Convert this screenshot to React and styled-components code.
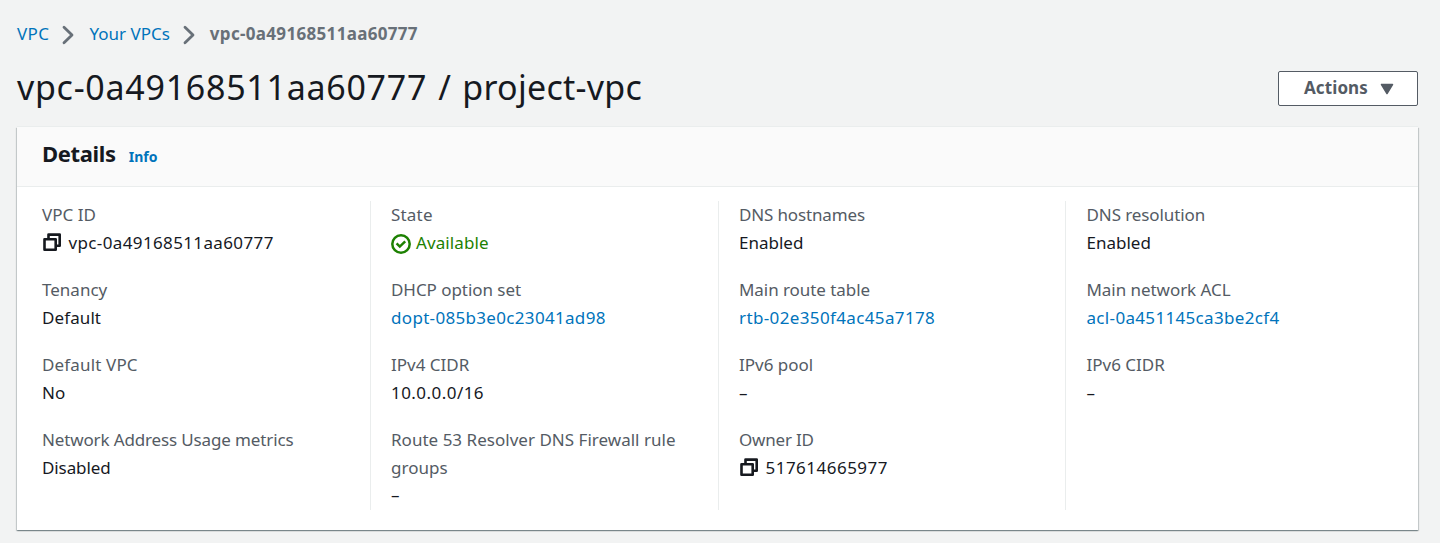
import React from "react";
import styled, { createGlobalStyle } from "styled-components";

const Global = createGlobalStyle`
  *, *::before, *::after { box-sizing: border-box; }
  body { margin: 0; background: #f2f3f3; font-family: "Noto Sans", "Open Sans", sans-serif; font-size: 17px; line-height: 28px; color: #16191f; }
`;

const Page = styled.main`
  height: 543px;
  padding: 20px 22px 0 17px;
  overflow: hidden;
`;

const Breadcrumbs = styled.nav`
  display: flex;
  align-items: center;
  height: 28px;
`;

const Text = styled.span`
  white-space: pre-line;
  letter-spacing: ${(p) => p.$track || 0}px;
`;

const Link = styled(Text).attrs({ as: "a" })`
  color: #0073bb;
`;

const Current = styled(Text)`
  color: #687078;
  font-weight: 700;
`;

const Chevron = styled.svg`
  flex: none;
  width: 12px;
  height: 20px;
  margin: 2px 15px 0 13px;
`;

const TitleRow = styled.div`
  display: flex;
  justify-content: space-between;
  height: 78px;
  padding-top: 17px;
`;

const Title = styled.h1`
  margin: 0;
  font-size: 34px;
  font-weight: 400;
  line-height: 44px;
  word-spacing: 2px;
  white-space: nowrap;
`;

const ActionsButton = styled.button`
  display: flex;
  align-items: center;
  width: 140px;
  height: 35px;
  margin: 6px 0 0;
  padding: 0 0 2px 25px;
  gap: 12px;
  border: 1px solid #545b64;
  border-radius: 2px;
  background: #fff;
  color: #545b64;
  font: 700 17px/28px "Noto Sans", "Open Sans", sans-serif;
`;

const Caret = styled.svg`
  width: 14px;
  height: 12px;
  margin-top: 2px;
`;

const Panel = styled.section`
  width: 1401px;
  height: 403px;
  margin-top: 1px;
  background: #fff;
  box-shadow: 0 1px 1px 0 rgba(0, 28, 36, 0.3), 1px 1px 1px 0 rgba(0, 28, 36, 0.15), -1px 1px 1px 0 rgba(0, 28, 36, 0.15), 0 -1px 0 0 #eaeded;
`;

const PanelHeader = styled.header`
  display: flex;
  align-items: baseline;
  gap: 13px;
  height: 60px;
  padding: 12px 25px 0;
  background: #fafafa;
  border-bottom: 1px solid #eaeded;
`;

const PanelTitle = styled.h2`
  margin: 0;
  font-size: 22px;
  line-height: 28px;
  letter-spacing: ${(p) => p.$track}px;
`;

const InfoLink = styled(Link)`
  font-size: 14px;
  font-weight: 700;
`;

const Columns = styled.div`
  display: grid;
  grid-template-columns: 353px 348px 347px 353px;
  height: 309px;
  margin-top: 14px;
`;

const Column = styled.div`
  display: flex;
  flex-direction: column;
  gap: 19px;
  padding-left: ${(p) => p.$inset}px;
  border-left: ${(p) => (p.$first ? "none" : "1px solid #eaeded")};
`;

const Field = styled.div`
  display: flex;
  flex-direction: column;
`;

const Label = styled(Text)`
  color: #545b64;
`;

const Value = styled.div`
  display: flex;
  align-items: center;
  height: ${(p) => (p.$short ? 26 : 28)}px;
  color: ${(p) => (p.$kind === "ok" ? "#1d8102" : "#16191f")};
`;

const CopySvg = styled.svg`
  flex: none;
  width: 20px;
  height: 20px;
  margin: -2px 6.5px 0 0;
`;

const StatusSvg = styled.svg`
  flex: none;
  width: 20px;
  height: 20px;
  margin: 2px 5px 0 0;
`;

const CopyIcon = () => (
  <CopySvg viewBox="0 0 20 20" fill="none" stroke="#16191f" strokeWidth="2.6" strokeLinejoin="round">
    <path d="M2.5 7.3h11.2v10.4H2.5z" />
    <path d="M6.5 7V2.6h11.2v11.1h-4" />
  </CopySvg>
);

const StatusIcon = () => (
  <StatusSvg viewBox="0 0 20 20" fill="none" stroke="#1d8102" strokeWidth="2.5">
    <circle cx="10" cy="10" r="8.7" />
    <path d="M5.6 9.4l3.2 3.2 5.4-5.2" />
  </StatusSvg>
);

const Separator = () => (
  <Chevron viewBox="0 0 12 20" fill="none" stroke="#687078" strokeWidth="2.8" strokeLinecap="round" strokeLinejoin="round">
    <path d="M2 2.2l8 7.8-8 7.8" />
  </Chevron>
);

const columns = [
  [
    { label: "VPC ID", value: "vpc-0a49168511aa60777", copy: true, track: 0.37 },
    { label: "Tenancy", value: "Default", track: 0.1 },
    { label: "Default VPC", value: "No", labelTrack: 0.15 },
    { label: "Network Address Usage metrics", value: "Disabled", labelTrack: -0.14, track: -0.1 },
  ],
  [
    { label: "State", value: "Available", kind: "ok", labelTrack: 0.2, track: 0.1 },
    { label: "DHCP option set", value: "dopt-085b3e0c23041ad98", kind: "link", labelTrack: -0.05, track: 0.32 },
    { label: "IPv4 CIDR", value: "10.0.0.0/16", track: 0.45 },
    { label: "Route 53 Resolver DNS Firewall rule\ngroups", value: "–", labelTrack: 0.02, short: true },
  ],
  [
    { label: "DNS hostnames", value: "Enabled", labelTrack: -0.15 },
    { label: "Main route table", value: "rtb-02e350f4ac45a7178", kind: "link", labelTrack: -0.06, track: 0.37 },
    { label: "IPv6 pool", value: "–" },
    { label: "Owner ID", value: "517614665977", copy: true, labelTrack: -0.2, track: 0.48 },
  ],
  [
    { label: "DNS resolution", value: "Enabled", labelTrack: -0.1 },
    { label: "Main network ACL", value: "acl-0a451145ca3be2cf4", kind: "link", labelTrack: -0.05, track: 0.33 },
    { label: "IPv6 CIDR", value: "–" },
  ],
];

const insets = [25, 20, 20, 20.5];

export default function App() {
  return (
    <Page>
      <Global />
      <Breadcrumbs>
        <Link $track={0.4}>VPC</Link>
        <Separator />
        <Link>Your VPCs</Link>
        <Separator />
        <Current $track={0.32}>vpc-0a49168511aa60777</Current>
      </Breadcrumbs>
      <TitleRow>
        <Title>
          <Text $track={0.72}>vpc-0a49168511aa60777</Text>
          <Text $track={0.28}> / project-vpc</Text>
        </Title>
        <ActionsButton>
          <Text $track={0.1}>Actions</Text>
          <Caret viewBox="0 0 14 12">
            <path d="M1.5 1.5h11L7 10.5z" fill="#545b64" stroke="#545b64" strokeWidth="1.5" strokeLinejoin="round" />
          </Caret>
        </ActionsButton>
      </TitleRow>
      <Panel>
        <PanelHeader>
          <PanelTitle $track={-0.35}>Details</PanelTitle>
          <InfoLink>Info</InfoLink>
        </PanelHeader>
        <Columns>
          {columns.map((fields, i) => (
            <Column key={i} $first={i === 0} $inset={insets[i]}>
              {fields.map((f) => (
                <Field key={f.label}>
                  <Label $track={f.labelTrack}>{f.label}</Label>
                  <Value $kind={f.kind} $short={f.short}>
                    {f.copy && <CopyIcon />}
                    {f.kind === "ok" && <StatusIcon />}
                    {f.kind === "link" ? <Link $track={f.track}>{f.value}</Link> : <Text $track={f.track}>{f.value}</Text>}
                  </Value>
                </Field>
              ))}
            </Column>
          ))}
        </Columns>
      </Panel>
    </Page>
  );
}
